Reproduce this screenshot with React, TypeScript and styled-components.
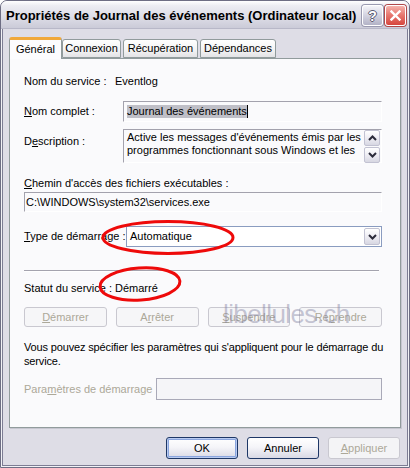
import React from 'react';
import styled, { createGlobalStyle } from 'styled-components';

const GlobalStyle = createGlobalStyle`
  html, body {
    margin: 0;
    padding: 0;
    background: #ffffff;
  }
  body {
    font-family: "Liberation Sans", Arial, sans-serif;
    font-size: 11px;
    color: #000000;
  }
`;

const tabs = ['Général', 'Connexion', 'Récupération', 'Dépendances'];
const tabWidths = [53, 59, 75, 76];

const Chevron: React.FC<{ up?: boolean }> = ({ up }) => (
  <svg width="9" height="6" viewBox="0 0 9 6">
    <path
      d={up ? 'M1 5 L4.5 1.5 L8 5' : 'M1 1 L4.5 4.5 L8 1'}
      fill="none"
      stroke="#2b2b3a"
      strokeWidth="2"
    />
  </svg>
);

const App: React.FC = () => {
  return (
    <>
      <GlobalStyle />
      <Window>
        <TitleBar>
          <Title>Propriétés de Journal des événements (Ordinateur local)</Title>
          <CaptionButtons>
            <HelpButton>?</HelpButton>
            <CloseButton>
              <svg width="11" height="11" viewBox="0 0 11 11">
                <path d="M1.5 1.5 L9.5 9.5 M9.5 1.5 L1.5 9.5" stroke="#ffffff" strokeWidth="2.4" strokeLinecap="square" />
              </svg>
            </CloseButton>
          </CaptionButtons>
        </TitleBar>

        <Body>
          <TabStrip>
            {tabs.map((t, i) => (
              <Tab key={t} $active={i === 0} $gap={i > 1 ? 2 : 0} style={{ width: tabWidths[i] }}>
                {t}
              </Tab>
            ))}
          </TabStrip>

          <Panel>
            <FirstRow>
              <Label $w={91}>Nom du service :</Label>
              <span>Eventlog</span>
            </FirstRow>

            <FieldRow $mt={13}>
              <Label $w={99}><U>N</U>om complet :</Label>
              <SunkenField $h={21}>
                <Selected>Journal des événements</Selected>
                <Caret />
              </SunkenField>
            </FieldRow>

            <FieldRow $mt={7} $top>
              <Label $w={99} $pt={6}>D<U>e</U>scription :</Label>
              <SunkenField $h={34} $multi>
                <DescText>
                  Active les messages d'événements émis par les
                  <br />
                  programmes fonctionnant sous Windows et les
                </DescText>
                <ScrollCol>
                  <SmallButton $h={16}><Chevron up /></SmallButton>
                  <SmallButton $h={16}><Chevron /></SmallButton>
                </ScrollCol>
              </SunkenField>
            </FieldRow>

            <BlockLabel $mt={14}><U>C</U>hemin d'accès des fichiers exécutables :</BlockLabel>
            <FieldRow $mt={2}>
              <SunkenField $h={20} $pl={1}>C:\WINDOWS\system32\services.exe</SunkenField>
            </FieldRow>

            <FieldRow $mt={14}>
              <Label $w={102}><U>T</U>ype de démarrage :</Label>
              <Combo>
                <ComboText>Automatique</ComboText>
                <SmallButton $h={17}><Chevron /></SmallButton>
              </Combo>
            </FieldRow>

            <Separator />

            <StatusRow>
              <Label $w={91}>Statut du service :</Label>
              <span>Démarré</span>
            </StatusRow>

            <ActionGrid>
              <PanelButton disabled><U>D</U>émarrer</PanelButton>
              <PanelButton disabled>A<U>r</U>rêter</PanelButton>
              <PanelButton disabled><U>S</U>uspendre</PanelButton>
              <PanelButton disabled>Re<U>p</U>rendre</PanelButton>
            </ActionGrid>

            <Paragraph>
              <Line>Vous pouvez spécifier les paramètres qui s'appliquent pour le démarrage du</Line>
              <Line>service.</Line>
            </Paragraph>

            <FieldRow $mt={10}>
              <Label $w={132} $muted>Para<U>m</U>ètres de démarrage :</Label>
              <DisabledField />
            </FieldRow>
          </Panel>

          <Footer>
            <DialogButton $default>OK</DialogButton>
            <DialogButton>Annuler</DialogButton>
            <DialogButton disabled><U>A</U>ppliquer</DialogButton>
          </Footer>
        </Body>

        <Watermark>libellules.ch</Watermark>
        <Marks width="410" height="468" viewBox="0 0 410 468">
          <ellipse cx="168" cy="237.5" rx="65" ry="16" fill="none" stroke="#ee0a0a" strokeWidth="3" />
          <ellipse cx="140" cy="284" rx="40" ry="16" fill="none" stroke="#ee0a0a" strokeWidth="3" transform="rotate(-4 140 284)" />
        </Marks>
      </Window>
    </>
  );
};

const Window = styled.div`
  position: relative;
  width: 410px;
  height: 468px;
  box-sizing: border-box;
  display: flex;
  flex-direction: column;
  background: #dedde6;
  border: 1px solid #6e6e84;
  border-radius: 7px 7px 0 0;
  box-shadow: inset 0 0 0 1px #f2f2f6, inset 0 0 0 2px #7d7d94;
  overflow: hidden;
`;

const TitleBar = styled.div`
  height: 27px;
  flex: none;
  display: flex;
  align-items: center;
  justify-content: space-between;
  padding: 0 3px 0 5px;
  background: linear-gradient(#ffffff 0%, #ececf2 18%, #dfdfe8 55%, #cbcbd8 100%);
  border-bottom: 1px solid #b8b8c8;
`;

const Title = styled.div`
  font-weight: bold;
  font-size: 13px;
  color: #000000;
  white-space: nowrap;
  padding-top: 2px;
`;

const CaptionButtons = styled.div`
  display: flex;
  gap: 2px;
  padding-top: 2px;
`;

const CaptionBase = styled.div`
  width: 21px;
  height: 21px;
  box-sizing: border-box;
  border-radius: 3px;
  border: 1px solid #ffffff;
  display: flex;
  align-items: center;
  justify-content: center;
  box-shadow: 0 0 0 1px #9a9ab0;
`;

const HelpButton = styled(CaptionBase)`
  background: linear-gradient(#f4f4f9 0%, #d6d6e3 45%, #b3b3c6 100%);
  color: #ffffff;
  font-weight: bold;
  font-size: 14px;
  text-shadow: 1px 0 0 #5a5a70, -1px 0 0 #5a5a70, 0 1px 0 #5a5a70, 0 -1px 0 #5a5a70;
`;

const CloseButton = styled(CaptionBase)`
  background: linear-gradient(#f5b3ac 0%, #e77a72 45%, #d6463e 100%);
  box-shadow: 0 0 0 1px #b0484a;
`;

const Body = styled.div`
  flex: 1;
  display: flex;
  flex-direction: column;
  padding: 8px 8px 0 8px;
`;

const TabStrip = styled.div`
  display: flex;
  align-items: flex-end;
  height: 21px;
  position: relative;
  z-index: 1;
`;

const Tab = styled.div<{ $active?: boolean; $gap: number }>`
  box-sizing: border-box;
  margin-left: ${p => p.$gap}px;
  height: ${p => (p.$active ? 22 : 19)}px;
  margin-bottom: ${p => (p.$active ? -1 : 0)}px;
  display: flex;
  align-items: center;
  justify-content: center;
  padding-bottom: ${p => (p.$active ? 2 : 1)}px;
  border: 1px solid #919b9c;
  border-bottom: ${p => (p.$active ? 'none' : '1px solid #919b9c')};
  border-top: ${p => (p.$active ? '3px solid #f0a83a' : '1px solid #919b9c')};
  border-radius: 3px 3px 0 0;
  background: ${p => (p.$active ? '#fcfcfe' : 'linear-gradient(#ffffff, #f3f3f3 60%, #e3e3e6)')};
  white-space: nowrap;
`;

const Panel = styled.div`
  height: 370px;
  box-sizing: border-box;
  display: flex;
  flex-direction: column;
  padding: 16px 18px 0 14px;
  background: #fafafc;
  border: 1px solid #919b9c;
  box-shadow: 1px 1px 0 #c6c6d0;
`;

const FirstRow = styled.div`
  display: flex;
  line-height: 13px;
`;

const FieldRow = styled.div<{ $mt: number; $top?: boolean }>`
  display: flex;
  align-items: ${p => (p.$top ? 'flex-start' : 'center')};
  margin-top: ${p => p.$mt}px;
  line-height: 13px;
`;

const Label = styled.div<{ $w: number; $pt?: number; $muted?: boolean }>`
  width: ${p => p.$w}px;
  flex: none;
  padding-top: ${p => p.$pt || 0}px;
  color: ${p => (p.$muted ? '#aca899' : '#000000')};
  white-space: nowrap;
`;

const BlockLabel = styled.div<{ $mt: number }>`
  margin-top: ${p => p.$mt}px;
  line-height: 13px;
`;

const U = styled.span`
  text-decoration: underline;
`;

const SunkenField = styled.div<{ $h: number; $multi?: boolean; $pl?: number }>`
  flex: 1;
  height: ${p => p.$h}px;
  box-sizing: border-box;
  display: flex;
  align-items: ${p => (p.$multi ? 'flex-start' : 'center')};
  justify-content: ${p => (p.$multi ? 'space-between' : 'flex-start')};
  padding-left: ${p => (p.$pl !== undefined ? p.$pl : 3)}px;
  border-top: 1px solid #a3a2ad;
  border-left: 1px solid #a3a2ad;
  border-right: 1px solid #ffffff;
  border-bottom: 1px solid #ffffff;
  white-space: nowrap;
`;

const Selected = styled.span`
  background: #bfbfc7;
`;

const Caret = styled.span`
  width: 1px;
  height: 13px;
  background: #000000;
`;

const DescText = styled.div`
  padding-top: 1px;
  line-height: 13px;
`;

const ScrollCol = styled.div`
  display: flex;
  flex-direction: column;
  gap: 1px;
  padding: 0 1px 0 0;
`;

const SmallButton = styled.div<{ $h: number }>`
  width: 16px;
  height: ${p => p.$h}px;
  box-sizing: border-box;
  display: flex;
  align-items: center;
  justify-content: center;
  border: 1px solid #c2c2d2;
  border-radius: 2px;
  background: linear-gradient(#ffffff, #ecebf2 55%, #d7d7e2);
`;

const Combo = styled.div`
  flex: 1;
  height: 21px;
  box-sizing: border-box;
  display: flex;
  align-items: center;
  justify-content: space-between;
  padding: 0 1px 0 3px;
  background: #ffffff;
  border: 1px solid #8a9cc0;
`;

const ComboText = styled.span`
  font-size: 11px;
`;

const Separator = styled.div`
  margin-top: 23px;
  margin-right: 3px;
  height: 0;
  border-top: 1px solid #a4a3ae;
  border-bottom: 1px solid #ffffff;
`;

const StatusRow = styled.div`
  display: flex;
  margin-top: 10px;
  line-height: 13px;
`;

const ActionGrid = styled.div`
  display: grid;
  grid-template-columns: repeat(4, 1fr);
  gap: 9px;
  margin-top: 12px;
`;

const PanelButton = styled.button`
  height: 20px;
  padding: 0;
  font-family: "Liberation Sans", Arial, sans-serif;
  font-size: 11px;
  color: #aca899;
  background: #f6f6f8;
  border: 1px solid #c9c8d0;
  border-radius: 3px;
`;

const Paragraph = styled.div`
  margin: 13px 0 0 0;
  line-height: 14px;
`;

const Line = styled.div`
  white-space: nowrap;
  letter-spacing: -0.15px;
`;

const DisabledField = styled.div`
  flex: 1;
  height: 22px;
  box-sizing: border-box;
  background: #f5f5f8;
  border: 1px solid #a9a9b8;
`;

const Footer = styled.div`
  display: flex;
  justify-content: flex-end;
  gap: 9px;
  margin-top: 9px;
  padding-right: 1px;
`;

const DialogButton = styled.button<{ $default?: boolean }>`
  width: 72px;
  height: 22px;
  padding: 0;
  font-family: "Liberation Sans", Arial, sans-serif;
  font-size: 11px;
  color: #000000;
  border-radius: 3px;
  border: 1px solid #1e3766;
  background: linear-gradient(#ffffff 0%, #f5f5f9 45%, #d9d9e5 100%);
  box-shadow: ${p => (p.$default ? 'inset 0 0 0 1px #b9cbf2, inset 0 0 0 2px #8aa5de' : 'none')};

  &:disabled {
    color: #aca899;
    border-color: #c9c8d0;
    background: #f4f4f6;
  }
`;

const Watermark = styled.div`
  position: absolute;
  left: 222px;
  top: 298px;
  font-size: 26px;
  line-height: 30px;
  letter-spacing: -0.6px;
  color: rgba(130, 130, 160, 0.45);
  pointer-events: none;
`;

const Marks = styled.svg`
  position: absolute;
  left: -1px;
  top: -1px;
  pointer-events: none;
`;

export default App;
